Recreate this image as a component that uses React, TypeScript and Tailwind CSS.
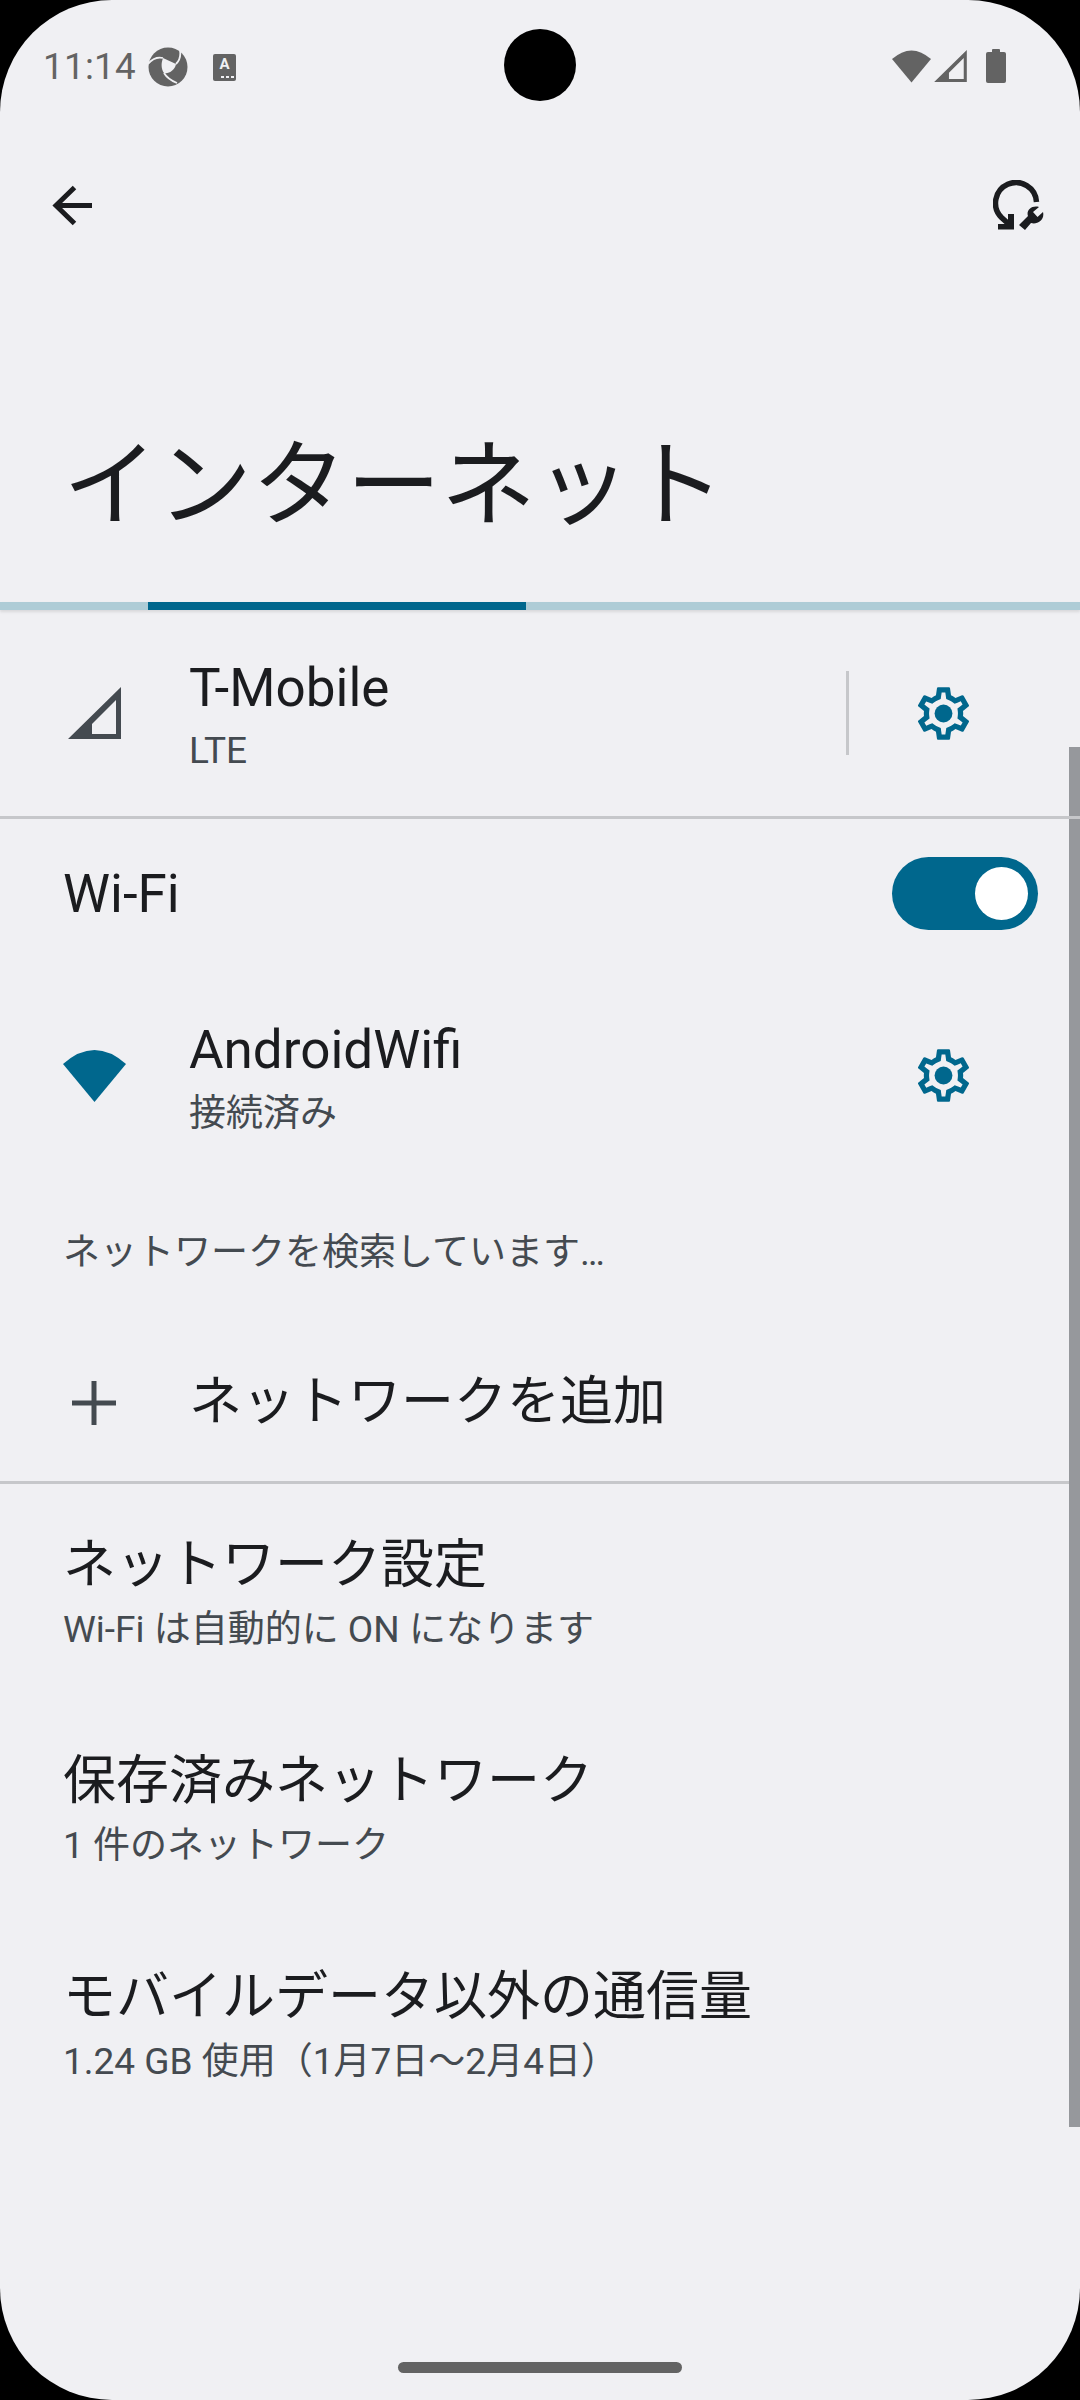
import React from 'react';

const cjk = { fontFamily: 'Roboto, "Noto Sans CJK JP", sans-serif' };

const gearPath =
  'M19.43 12.98c.04-.32.07-.64.07-.98 0-.34-.03-.66-.07-.98l2.11-1.65c.19-.15.24-.42.12-.64l-2-3.46c-.09-.16-.26-.25-.44-.25-.06 0-.12.01-.17.03l-2.49 1c-.52-.4-1.08-.73-1.69-.98l-.38-2.65C14.46 2.18 14.25 2 14 2h-4c-.25 0-.46.18-.49.42l-.38 2.65c-.61.25-1.17.59-1.69.98l-2.49-1c-.06-.02-.12-.03-.18-.03-.17 0-.34.09-.43.25l-2 3.46c-.13.22-.07.49.12.64l2.11 1.65c-.04.32-.07.65-.07.98 0 .33.03.66.07.98l-2.11 1.65c-.19.15-.24.42-.12.64l2 3.46c.09.16.26.25.44.25.06 0 .12-.01.17-.03l2.49-1c.52.4 1.08.73 1.69.98l.38 2.65c.03.24.24.42.49.42h4c.25 0 .46-.18.49-.42l.38-2.65c.61-.25 1.17-.59 1.69-.98l2.49 1c.06.02.12.03.18.03.17 0 .34-.09.43-.25l2-3.46c.12-.22.07-.49-.12-.64l-2.11-1.65zm-1.98-1.71c.04.31.05.52.05.73 0 .21-.02.43-.05.73l-.14 1.13.89.7 1.08.84-.7 1.21-1.27-.51-1.04-.42-.9.68c-.43.32-.84.56-1.25.73l-1.06.43-.16 1.13-.2 1.35h-1.4l-.19-1.35-.16-1.13-1.06-.43c-.43-.18-.83-.41-1.23-.71l-.91-.7-1.06.43-1.27.51-.7-1.21 1.08-.84.89-.7-.14-1.13c-.03-.31-.05-.54-.05-.74s.02-.43.05-.73l.14-1.13-.89-.7-1.08-.84.7-1.21 1.27.51 1.04.42.9-.68c.43-.32.84-.56 1.25-.73l1.06-.43.16-1.13.2-1.35h1.39l.19 1.35.16 1.13 1.06.43c.43.18.83.41 1.23.71l.91.7 1.06-.43 1.27-.51.7 1.21-1.07.85-.89.7.14 1.13z';

const Gear = () => (
  <svg viewBox="0 0 24 24" className="w-[63px] h-[63px] text-[#00678d]" fill="currentColor">
    <path d={gearPath} />
    <circle cx="12" cy="12" r="3.4" />
  </svg>
);

const WifiFan = ({ className }: { className: string }) => (
  <svg viewBox="0 0 63 52" className={className} fill="currentColor">
    <path d="M0 14Q31.5-14 63 14L31.5 52Z" />
  </svg>
);

const Signal = ({ className }: { className: string }) => (
  <svg viewBox="0 0 53 52" className={className} fill="currentColor">
    <path fillRule="evenodd" d="M0 52L53 0V52ZM24 47H48V13L24 37Z" />
  </svg>
);

const Row = ({ title, sub }: { title: string; sub: string }) => (
  <div className="h-[142px] flex flex-col pl-[63px]">
    <div className="text-[53px] leading-[70px] text-[#1b1c1f]">{title}</div>
    <div className="text-[37px] leading-[50px] mt-[5px] text-[#444a50]">{sub}</div>
  </div>
);

export default function App() {
  return (
    <div className="w-[1080px] h-[2400px] bg-black" style={cjk}>
      <div className="relative w-full h-full rounded-[112px] bg-[#f0f0f3] overflow-hidden flex flex-col">
        {/* status bar */}
        <div className="h-[131px] flex items-start justify-between pt-[47px] pl-[43px] pr-[74px] text-[#636363]">
          <div className="flex items-center">
            <span className="text-[36.75px] leading-[40px] tracking-[0.3px]">11:14</span>
            <svg viewBox="0 0 40 40" className="w-[40px] h-[40px] ml-[12px]">
              <circle cx="20" cy="20" r="19.5" fill="#636363" />
              <path d="M15 11L28 17C27 23 21 27 16 26C13 22 13 16 15 11Z" fill="#f0f0f3" />
              <path d="M0 17C5 11 11 10 15 11M32 3C33 9 31 14 28 17M16 26C19 31 24 34 29 36" fill="none" stroke="#f0f0f3" strokeWidth="1.8" />
            </svg>
            <div className="relative w-[23px] h-[27px] ml-[25px] rounded-[2px] bg-[#636363] flex justify-center">
              <span className="text-[15px] leading-[21px] font-bold text-[#f0f0f3]">A</span>
              <span className="absolute bottom-[3px] right-[2px] w-[13px] h-[2px] bg-[repeating-linear-gradient(90deg,#f0f0f3_0_3px,transparent_3px_5px)]" />
            </div>
          </div>
          <div className="flex items-center pt-[2px]">
            <WifiFan className="w-[39px] h-[33px]" />
            <Signal className="w-[33px] h-[32px] ml-[3px]" />
            <div className="ml-[19px] flex flex-col items-center">
              <div className="w-[8px] h-[3px] bg-[#636363] rounded-t-[1px]" />
              <div className="w-[20px] h-[31px] bg-[#636363] rounded-[2px]" />
            </div>
          </div>
        </div>

        {/* toolbar */}
        <div className="h-[148px] flex items-center justify-between pl-[52px] pr-[36px] text-[#1b1c1f]">
          <svg viewBox="0 0 40 41" className="w-[40px] h-[41px]" fill="none" stroke="currentColor" strokeWidth="5">
            <path d="M22.5 2.5L4 20.5L22.5 38.5M4 20.5H40" />
          </svg>
          <svg viewBox="0 0 51 50" className="w-[51px] h-[50px]" fill="currentColor">
            <path d="M43.5 22A20.5 20.5 0 1 0 8.5 37.5L19 47" fill="none" stroke="currentColor" strokeWidth="5.5" />
            <path d="M5 44H15V34H21V49.5H5Z" />
            <path d="M26 45L35 36C33 31 38 25 46 27L40 32L44.5 37L50 32C52 40 44 45 38 43L32 50Z" />
          </svg>
        </div>

        <h1 className="h-[323px] pt-[145px] pl-[63px] text-[94.5px] leading-[124px] text-[#1b1c1f] font-normal">インターネット</h1>

        {/* tab indicator */}
        <div className="h-[8px] bg-[#aeccd6] shadow-[0_2px_3px_rgba(0,0,0,0.1)]">
          <div className="w-[378px] h-full ml-[148px] bg-[#00678d]" />
        </div>

        {/* mobile network */}
        <div className="h-[206px] flex items-center shrink-0">
          <div className="w-[189px] pl-[68px] shrink-0">
            <Signal className="w-[53px] h-[52px] text-[#444a50]" />
          </div>
          <div className="flex-1">
            <div className="text-[53px] leading-[70px] text-[#1b1c1f]">T-Mobile</div>
            <div className="text-[37px] leading-[50px] mt-[3px] -mb-[3px] text-[#444a50]">LTE</div>
          </div>
          <div className="w-[3px] h-[84px] bg-[#c6c7ca]" />
          <div className="w-[231px] pl-[63px] shrink-0 flex"><Gear /></div>
        </div>
        <div className="h-[3px] bg-[#c6c7ca]" />

        {/* wifi toggle */}
        <div className="h-[149px] flex items-center justify-between pl-[63px] pr-[42px] shrink-0">
          <span className="text-[53px] text-[#1b1c1f] mt-[2px]">Wi-Fi</span>
          <div className="w-[146px] h-[73px] rounded-full bg-[#00678d] flex items-center justify-end pr-[10px]">
            <div className="w-[53px] h-[53px] rounded-full bg-white" />
          </div>
        </div>

        {/* connected network */}
        <div className="h-[215px] flex items-center">
          <div className="w-[189px] pl-[63px] shrink-0">
            <WifiFan className="w-[63px] h-[52px] text-[#00678d]" />
          </div>
          <div className="flex-1">
            <div className="text-[53px] leading-[70px] -mt-[1px] text-[#1b1c1f]">AndroidWifi</div>
            <div className="text-[37px] leading-[50px] mt-[4px] -mb-[3px] text-[#444a50]">接続済み</div>
          </div>
          <div className="w-[233px] pl-[65px] shrink-0"><Gear /></div>
        </div>

        <div className="h-[100px] mt-[20px] pl-[63px] flex items-center text-[37px] text-[#444a50]">ネットワークを検索しています…</div>

        <div className="h-[156px] mt-[22px] flex items-center">
          <div className="w-[189px] pl-[72px] shrink-0">
            <svg viewBox="0 0 44 44" className="w-[44px] h-[44px] text-[#444a50]" fill="none" stroke="currentColor" strokeWidth="5">
              <path d="M22 0V44M0 22H44" />
            </svg>
          </div>
          <span className="text-[53px] text-[#1b1c1f]">ネットワークを追加</span>
        </div>
        <div className="h-[3px] bg-[#c6c7ca]" />

        <div className="flex flex-col pt-[46px] gap-[74px]">
          <Row title="ネットワーク設定" sub="Wi-Fi は自動的に ON になります" />
          <Row title="保存済みネットワーク" sub="1 件のネットワーク" />
          <Row title="モバイルデータ以外の通信量" sub="1.24 GB 使用（1月7日～2月4日）" />
        </div>

        {/* scrollbar */}
        <div className="absolute right-0 top-[747px] w-[11px] h-[1380px] bg-[#96989c]">
          <div className="absolute top-[69px] left-0 w-full h-[3px] bg-[#c6c7ca]" />
        </div>
        {/* gesture pill */}
        <div className="absolute bottom-[27px] left-[398px] w-[284px] h-[11px] rounded-full bg-[#636363]" />
        {/* camera cutout */}
        <div className="absolute top-[29px] left-[504px] w-[72px] h-[72px] rounded-full bg-black" />
      </div>
    </div>
  );
}
